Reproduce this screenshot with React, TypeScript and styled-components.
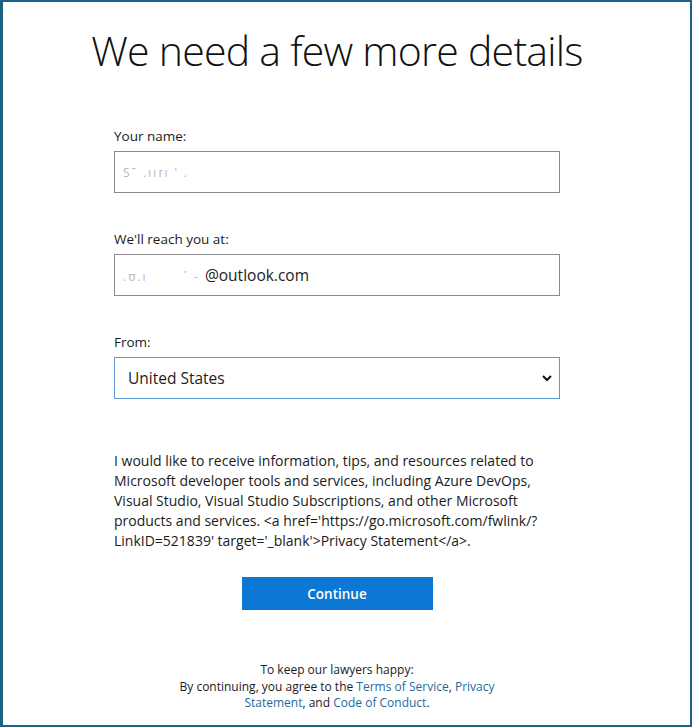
import React from "react";
import styled, { createGlobalStyle } from "styled-components";

const GlobalStyle = createGlobalStyle`
  html, body {
    margin: 0;
    padding: 0;
    background: #ffffff;
  }
  body {
    font-family: "Open Sans", "Noto Sans", sans-serif;
    color: #1b1b1b;
  }
`;

const Frame = styled.div`
  box-sizing: border-box;
  width: 692px;
  height: 727px;
  border: 2px solid #1d6184;
  border-left-width: 3px;
  background: #ffffff;
  overflow: hidden;
`;

const Column = styled.div`
  width: 446px;
  margin-left: 111px;
  display: flex;
  flex-direction: column;
  align-items: stretch;
`;

const Headline = styled.h1`
  margin: 20px 0 0 0;
  align-self: center;
  white-space: nowrap;
  font-family: "Open Sans", "Noto Sans", sans-serif;
  font-weight: 300;
  font-size: 41px;
  line-height: 56px;
  letter-spacing: -0.75px;
  color: #111111;
`;

const Form = styled.div`
  margin-top: 49px;
  display: flex;
  flex-direction: column;
  gap: 37px;
`;

const Group = styled.div`
  display: flex;
  flex-direction: column;
  gap: 6px;
`;

const Label = styled.div`
  font-size: 13.5px;
  line-height: 18px;
  color: #1b1b1b;
`;

const Field = styled.div<{ $focused?: boolean }>`
  box-sizing: border-box;
  height: 42px;
  display: flex;
  align-items: center;
  justify-content: space-between;
  padding: 0 8px 0 ${(p) => (p.$focused ? 13 : 8)}px;
  border: 1px solid ${(p) => (p.$focused ? "#5d9ad6" : "#8a8a8a")};
  font-size: 15.5px;
  color: #222222;
  background: #ffffff;
`;

const Faint = styled.span`
  color: #b8b8b8;
  letter-spacing: 2px;
  font-size: 12px;
`;

const Chevron = styled.svg`
  width: 12px;
  height: 12px;
  margin-right: -2px;
`;

const Consent = styled.p`
  margin: 52px 0 0 0;
  font-size: 14px;
  line-height: 20px;
  color: #1b1b1b;
`;

const ButtonRow = styled.div`
  margin-top: 26px;
  display: flex;
  justify-content: center;
`;

const PrimaryButton = styled.button`
  width: 191px;
  height: 33px;
  border: none;
  background: #0d78d3;
  color: #ffffff;
  font-family: "Open Sans", "Noto Sans", sans-serif;
  font-size: 13.5px;
  font-weight: 600;
  cursor: pointer;
`;

const Footer = styled.div`
  margin: 52px auto 0 auto;
  width: 330px;
  text-align: center;
  font-size: 12px;
  line-height: 16.5px;
  color: #1b1b1b;
`;

const Link = styled.a`
  color: #1f6a9c;
  text-decoration: none;
`;

export default function App() {
  return (
    <>
      <GlobalStyle />
      <Frame>
        <Column>
          <Headline>We need a few more details</Headline>
          <Form>
            <Group>
              <Label>Your name:</Label>
              <Field>
                <Faint>Sˉ .ııɾı ˈ .</Faint>
              </Field>
            </Group>
            <Group>
              <Label>We'll reach you at:</Label>
              <Field>
                <span>
                  <Faint>.ʊ.ı&nbsp;&nbsp;&nbsp;&nbsp;&nbsp;&nbsp;&nbsp;ˊ - </Faint>
                  @outlook.com
                </span>
              </Field>
            </Group>
            <Group>
              <Label>From:</Label>
              <Field $focused>
                <span>United States</span>
                <Chevron viewBox="0 0 12 12">
                  <path
                    d="M2 4 L6 8 L10 4"
                    fill="none"
                    stroke="#111111"
                    strokeWidth="2"
                  />
                </Chevron>
              </Field>
            </Group>
          </Form>
          <Consent>
            I would like to receive information, tips, and resources related to
            Microsoft developer tools and services, including Azure DevOps,
            Visual Studio, Visual Studio Subscriptions, and other Microsoft
            products and services. &lt;a
            href='https://go.microsoft.com/fwlink/?<wbr />LinkID=521839'
            target='_blank'&gt;Privacy Statement&lt;/a&gt;.
          </Consent>
          <ButtonRow>
            <PrimaryButton>Continue</PrimaryButton>
          </ButtonRow>
          <Footer>
            To keep our lawyers happy:
            <br />
            By continuing, you agree to the <Link>Terms of Service</Link>,{" "}
            <Link>Privacy Statement</Link>, and <Link>Code of Conduct</Link>.
          </Footer>
        </Column>
      </Frame>
    </>
  );
}
